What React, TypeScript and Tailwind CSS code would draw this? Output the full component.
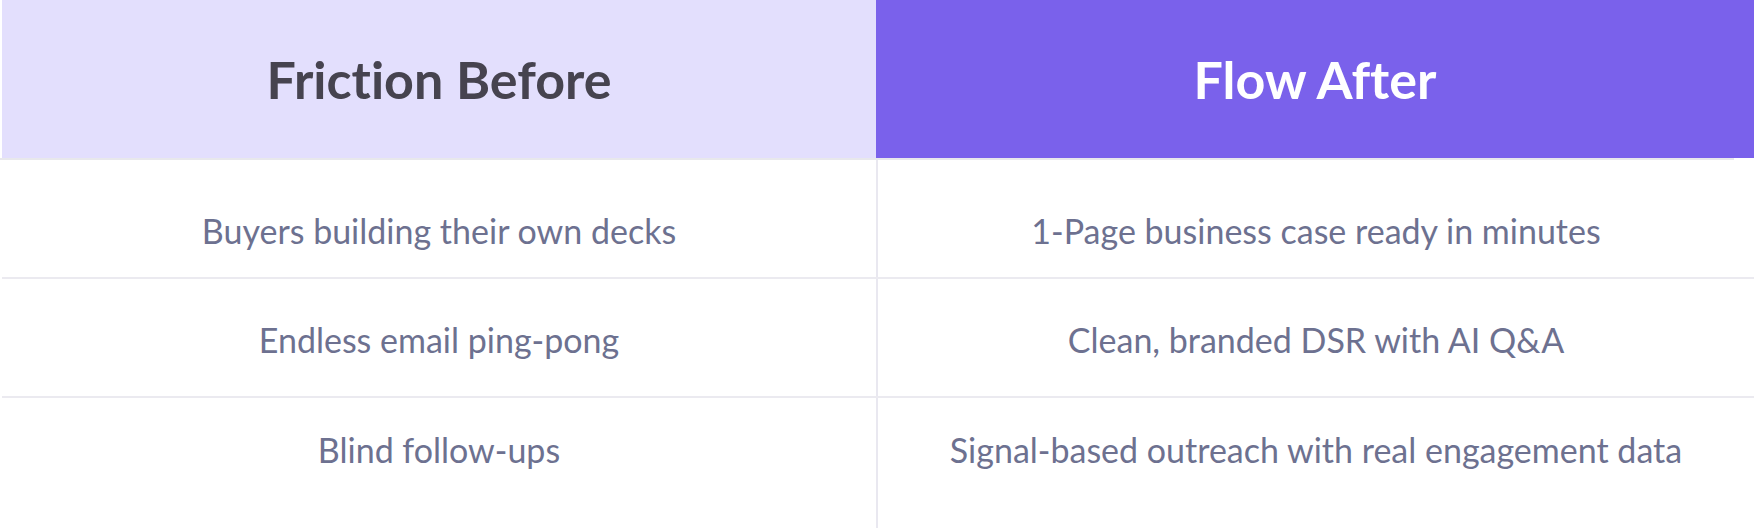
const rows = [
  { before: 'Buyers building their own decks', after: '1-Page business case ready in minutes', pad: 'pt-[54px]' },
  { before: 'Endless email ping-pong', after: 'Clean, branded DSR with AI Q&A', pad: 'pt-[44px]' },
  { before: 'Blind follow-ups', after: 'Signal-based outreach with real engagement data', pad: 'pt-[35px]' },
];

export default function App() {
  return (
    <div className="w-[1754px] h-[528px] overflow-hidden bg-white font-['Lato',sans-serif] [font-variant-ligatures:none]">
      {/* header */}
      <div className="flex h-[158px]">
        <div className="ml-[2px] w-[874px] flex items-center justify-center bg-[#e3dffd]">
          <span className="text-[52px] leading-none font-bold text-[#46434f]">Friction Before</span>
        </div>
        <div className="flex-1 flex items-center justify-center bg-[#7a61eb]">
          <span className="text-[52px] leading-none font-bold text-white">Flow After</span>
        </div>
      </div>
      <div className="w-[1734px] h-[2px] bg-[#e8e8ec]" />

      {/* rows */}
      {rows.map((r, i) => (
        <div
          key={r.before}
          className={`flex ml-[2px] ${i < rows.length - 1 ? 'h-[119px] border-b-2 border-[#ebeaf0]' : 'h-[130px]'}`}
        >
          <div className={`w-[874px] text-center ${r.pad}`}>
            <span className="text-[34px] leading-none text-[#6d7190]">{r.before}</span>
          </div>
          <div className="w-[2px] bg-[#e9e8f0]" />
          <div className={`flex-1 text-center ${r.pad}`}>
            <span className="text-[34px] leading-none text-[#6d7190]">{r.after}</span>
          </div>
        </div>
      ))}
    </div>
  );
}
